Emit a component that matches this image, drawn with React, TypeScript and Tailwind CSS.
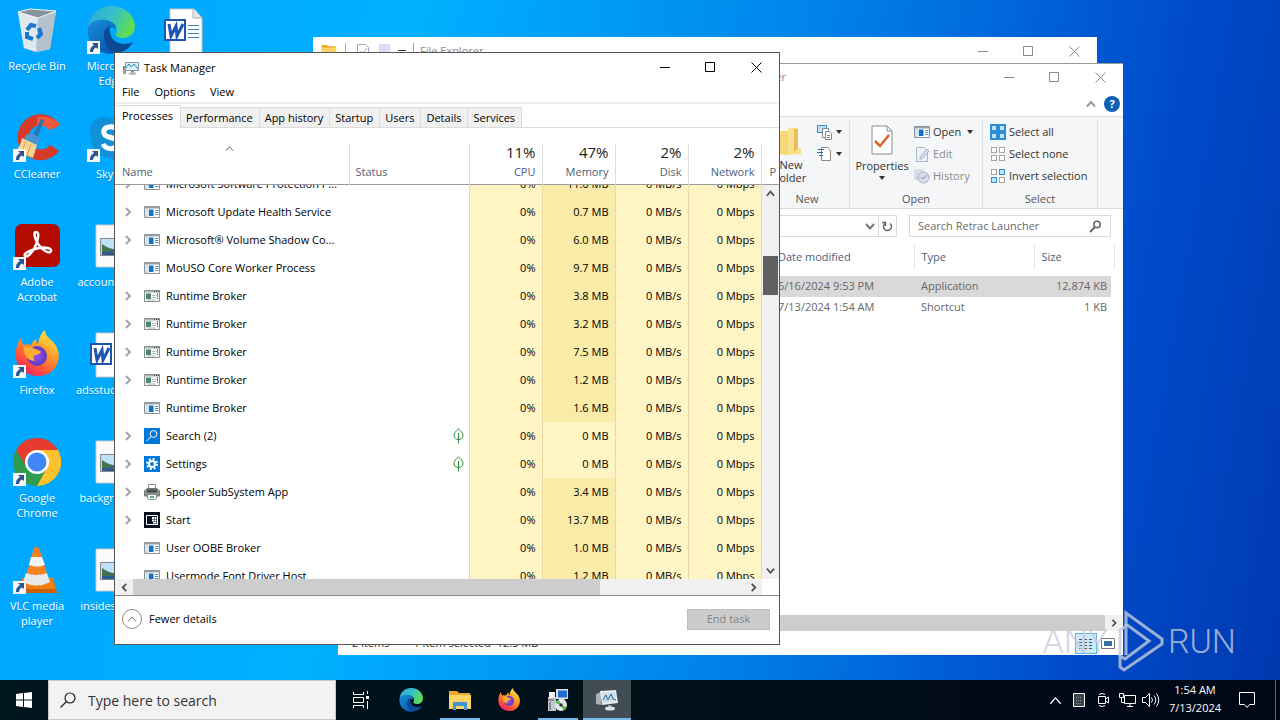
import { useState, type ReactNode } from 'react';

type IconKind = 'app' | 'broker' | 'search' | 'settings' | 'printer' | 'start';

interface ProcessRow {
  name: string;
  icon: IconKind;
  memory: string;
  expandable?: boolean;
  suspended?: boolean;
}

const processes: ProcessRow[] = [
  { name: 'Microsoft Software Protection P...', icon: 'app', memory: '11.6 MB', expandable: true },
  { name: 'Microsoft Update Health Service', icon: 'app', memory: '0.7 MB', expandable: true },
  { name: 'Microsoft® Volume Shadow Co...', icon: 'app', memory: '6.0 MB', expandable: true },
  { name: 'MoUSO Core Worker Process', icon: 'app', memory: '9.7 MB' },
  { name: 'Runtime Broker', icon: 'broker', memory: '3.8 MB', expandable: true },
  { name: 'Runtime Broker', icon: 'broker', memory: '3.2 MB', expandable: true },
  { name: 'Runtime Broker', icon: 'broker', memory: '7.5 MB', expandable: true },
  { name: 'Runtime Broker', icon: 'broker', memory: '1.2 MB', expandable: true },
  { name: 'Runtime Broker', icon: 'app', memory: '1.6 MB' },
  { name: 'Search (2)', icon: 'search', memory: '0 MB', expandable: true, suspended: true },
  { name: 'Settings', icon: 'settings', memory: '0 MB', expandable: true, suspended: true },
  { name: 'Spooler SubSystem App', icon: 'printer', memory: '3.4 MB', expandable: true },
  { name: 'Start', icon: 'start', memory: '13.7 MB', expandable: true },
  { name: 'User OOBE Broker', icon: 'app', memory: '1.0 MB' },
  { name: 'Usermode Font Driver Host', icon: 'app', memory: '1.2 MB' },
];

const usage = [
  { label: 'CPU', total: '11%' },
  { label: 'Memory', total: '47%' },
  { label: 'Disk', total: '2%' },
  { label: 'Network', total: '2%' },
];

const tabs = ['Processes', 'Performance', 'App history', 'Startup', 'Users', 'Details', 'Services'];

function Chevron({ dir, size = 10, width = 2 }: { dir: 'up' | 'down' | 'left' | 'right'; size?: number; width?: number }) {
  const d = {
    up: 'M1 7.5 5 3l4 4.5',
    down: 'M1 3l4 4.5L9 3',
    left: 'M7 1 3 5l4 4',
    right: 'M3 1l4 4-4 4',
  }[dir];
  return (
    <svg width={size} height={size} viewBox="0 0 10 10" fill="none" stroke="currentColor" strokeWidth={width}>
      <path d={d} />
    </svg>
  );
}

function ProcessIcon({ kind }: { kind: IconKind }) {
  if (kind === 'search') {
    return (
      <svg width="16" height="16" viewBox="0 0 16 16" fill="none">
        <path fill="#0078d7" d="M0 0h16v16H0z" />
        <circle cx="9.5" cy="6" r="3.4" stroke="#fff" />
        <path d="M7 8.5 2.8 13" stroke="#fff" />
      </svg>
    );
  }
  if (kind === 'settings') {
    return (
      <svg width="16" height="16" viewBox="0 0 16 16" fill="none">
        <path fill="#0078d7" d="M0 0h16v16H0z" />
        <circle cx="8" cy="8" r="3" stroke="#fff" strokeWidth="2.2" />
        <circle cx="8" cy="8" r="5" stroke="#fff" strokeWidth="2" strokeDasharray="2 1.93" />
      </svg>
    );
  }
  if (kind === 'printer') {
    return (
      <svg width="16" height="16" viewBox="0 0 16 16" fill="none">
        <path d="M4.5.5h7v5h-7z" fill="#fff" stroke="#8b8b8b" />
        <path d="M.5 7 3 4.5h10L15.5 7v5H.5z" fill="#8a8f93" stroke="#777" />
        <path d="M3 5.5h10v3H3z" fill="#4c4c4c" />
        <path d="M3.5 10.5h9v4l-2 1h-5l-2-1z" fill="#fff" stroke="#7c8f8c" />
        <path d="M6 12h4v2H6z" fill="#5ca89a" />
      </svg>
    );
  }
  if (kind === 'start') {
    return (
      <svg width="16" height="16" viewBox="0 0 16 16" fill="none">
        <path fill="#03101f" d="M0 0h16v16H0z" />
        <path d="M2.5 3.5h11v9h-11z" stroke="#fff" />
        <path d="M8 5h2v2H8zm2.5 0h2v2h-2zM8 7.5h2v2H8zm2.5 0h2v2h-2zM9 10h3.5v1.5H9z" fill="#fff" />
      </svg>
    );
  }
  if (kind === 'broker') {
    return (
      <svg width="16" height="16" viewBox="0 0 16 16" fill="none">
        <path d="M.5 2.5h15v11H.5z" fill="#f3f7f5" stroke="#87908f" />
        <path d="M1 3h14v1.5H1z" fill="#aeb8b6" />
        <path d="M10 3h1v1h-1zm2 0h1v1h-1zm2 0h1v1h-1z" fill="#444" />
        <path d="M2 5.5h5v5.5H2z" fill="#4c8573" />
        <path d="M8 7.5h4M8 9.5h4M3 12h8" stroke="#b5bfbc" />
        <path d="M13.5 5v4m0 1v1" stroke="#777" />
      </svg>
    );
  }
  return (
    <svg width="16" height="16" viewBox="0 0 16 16" fill="none">
      <path d="M.5 2.5h15v11H.5z" fill="#fff" stroke="#8b9298" />
      <path d="M1 3h14v1.5H1z" fill="#9aa2a8" />
      <path d="M1 5h4v8H1z" fill="#cfe6f7" />
      <path d="M5 5.5h4.5v6.5H5z" fill="#1673c4" />
      <path d="M11 6.5h3.5M11 8.5h3.5M11 10.5h3.5" stroke="#6593b8" />
    </svg>
  );
}

function TaskManagerIcon() {
  return (
    <svg width="16" height="16" viewBox="0 0 16 16" fill="none">
      <path d="M0 6h3v8H0z" fill="#9aa4a8" />
      <path d="M0 6h1v3H0z" fill="#2f9e4c" />
      <path d="M2.5 2.5h13v8h-13z" fill="#dff0fa" stroke="#8296a3" />
      <path d="m3 8 3-4 2 3 3-3 4 5" stroke="#2a8bb0" />
      <path d="M8 11h3v2H8z" fill="#8296a3" />
      <ellipse cx="9.5" cy="13.5" rx="4" ry="1.5" fill="#b4bec4" />
    </svg>
  );
}

function WindowControls({ light }: { light?: boolean }) {
  return (
    <div className={light ? 'flex self-stretch text-[#8a8a8a]' : 'flex self-stretch pb-px text-black'}>
      <button type="button" aria-label="Minimize" className="flex w-[46px] items-center justify-center">
        <svg width="11" height="11" stroke="currentColor"><path d="M0 5.5h10" /></svg>
      </button>
      <button type="button" aria-label="Maximize" className="flex w-[45px] items-center justify-center">
        <svg width="11" height="11" fill="none" stroke="currentColor"><path d="M.5.5h9v9h-9z" /></svg>
      </button>
      <button type="button" aria-label="Close" className="flex w-[46px] items-center justify-center">
        <svg width="11" height="11" stroke="currentColor"><path d="m.5.5 10 10m0-10-10 10" /></svg>
      </button>
    </div>
  );
}

// ---------- desktop icons ----------

function EdgeLogo({ size }: { size: number }) {
  return (
    <svg width={size} height={size} viewBox="0 0 48 48">
      <defs>
        <linearGradient id="edgeTop" x1="0" y1="0" x2="1" y2="0.4">
          <stop offset="0" stopColor="#2fa5dc" />
          <stop offset="0.55" stopColor="#35c1c9" />
          <stop offset="1" stopColor="#5fdc55" />
        </linearGradient>
        <linearGradient id="edgeLow" x1="0" y1="0" x2="0.6" y2="1">
          <stop offset="0" stopColor="#1a8fd8" />
          <stop offset="1" stopColor="#0a5ab4" />
        </linearGradient>
      </defs>
      <path fill="url(#edgeTop)" d="M1 21C3 8 12 0 24 0c14 0 24 10 24 20 0 8-6 12-12 12-5 0-8-2-7-4 3-5 0-12-8-13C12 14 3 17 1 21z" />
      <path fill="url(#edgeLow)" d="M1 21c3-6 11-9 18-7 7 1 10 6 10 9-5-3-11 0-12 7-1 8 6 14 13 17C13 51-1 38 1 21z" />
      <path fill="#0c4a94" d="M17 28c0-4 3-7 6-8-2 9 4 18 14 18 4 0 7-1 9-2-3 6-9 10-16 11-8-1-14-9-13-19z" />
    </svg>
  );
}

function FirefoxLogo({ size }: { size: number }) {
  return (
    <svg width={size} height={size} viewBox="0 0 48 48">
      <defs>
        <linearGradient id="ffBody" x1="0.8" y1="0" x2="0.2" y2="1">
          <stop offset="0" stopColor="#fff04f" />
          <stop offset="0.4" stopColor="#ff9a28" />
          <stop offset="0.75" stopColor="#ff4b3e" />
          <stop offset="1" stopColor="#e6197f" />
        </linearGradient>
        <radialGradient id="ffCore">
          <stop offset="0" stopColor="#9a4df5" />
          <stop offset="1" stopColor="#5a3bc4" />
        </radialGradient>
      </defs>
      <path fill="url(#ffBody)" d="M8 8c0 3 1 5 3 7 2-1 5-1 7 0 1-3 3-5 6-6-1 2-1 4 1 5 1-6 3-11 7-14 0 5 4 8 8 12 8 8 7 20 1 27C33 49 15 48 7 38 0 29 2 16 8 8z" />
      <circle cx="24" cy="26" r="10" fill="url(#ffCore)" />
      <path fill="#ffac2e" d="M11 17c5-1 8 0 11 2 3 1 6 2 6 3-1 3-6 2-7 4s0 4 1 5c-8 0-12-7-11-14z" />
    </svg>
  );
}

function RecycleBin() {
  return (
    <svg width="48" height="48" viewBox="0 0 48 48">
      <path d="m5 6 12-3 26 2-6 38-13 3-13-4z" fill="#c6d3dc" />
      <path d="m5 6 20 6-2 34-12-4z" fill="#dfe8ed" />
      <path d="m25 12 18-7-6 38-14 3z" fill="#b4c2cc" />
      <path d="m5 6 12-3 26 2-18 7z" fill="#84959e" stroke="#f2f6f8" />
      <path d="m14 24 4-5 5 1m3 2 2 6-4 4m-4 1-6-2 0-5" fill="none" stroke="#1678cf" strokeWidth="4" />
    </svg>
  );
}

function CCleaner() {
  return (
    <svg width="48" height="48" viewBox="0 0 48 48">
      <path d="M47 11A23 23 0 1 0 46 37l-9-6a12 12 0 1 1 0-15z" fill="#d63a28" />
      <path d="M47 11A23 23 0 0 0 24 3v9q8-2 13 4z" fill="#ef5a3c" />
      <path d="m28 5 3 1-7 19-5-2z" fill="#2c74b5" />
      <path d="M13 21q8-4 14 4l-3 6-13-6z" fill="#4596d1" />
      <path d="m9 24 15 7-4 13-18-7q5-3 7-13z" fill="#f7d493" />
      <path d="m13 27-5 12m10-9-4 12" stroke="#d89f55" />
    </svg>
  );
}

function Skype() {
  return (
    <svg width="48" height="48" viewBox="0 0 48 48">
      <circle cx="17" cy="17" r="14" fill="#0a91dd" />
      <circle cx="31" cy="31" r="15" fill="#0b7ed1" />
      <circle cx="24" cy="24" r="20" fill="#1290d8" />
      <path d="M31 17q-3-5-9-4c-7 1-7 8 0 10s9 3 8 8c-2 5-11 5-14-1" fill="none" stroke="#fff" strokeWidth="5" />
    </svg>
  );
}

function Acrobat() {
  return (
    <svg width="48" height="48" viewBox="0 0 48 48">
      <rect x="2" y="2" width="45" height="43" rx="7" fill="#b30b00" />
      <path d="M23 10c4 0 2 8-1 15-3 6-8 11-10 9-2-3 6-6 14-8 6-1 13 0 12 3-1 4-9-1-13-7-3-5-5-12-2-12z" fill="none" stroke="#fff" strokeWidth="2.5" />
    </svg>
  );
}

function Chrome() {
  return (
    <svg width="48" height="48" viewBox="0 0 48 48">
      <circle cx="24" cy="24" r="24" fill="#2e9b4f" />
      <path d="M3.2 12A24 24 0 0 1 44.800 12L24 13 13 28z" fill="#e63b2e" />
      <path d="M45 12A24 24 0 0 1 24 48l10-18-10-18z" fill="#fdc22d" />
      <circle cx="24" cy="24" r="12" fill="#fff" />
      <circle cx="24" cy="24" r="9.5" fill="#4086f4" />
    </svg>
  );
}

function Vlc() {
  return (
    <svg width="48" height="48" viewBox="0 0 48 48">
      <path d="M9 32h31l4 15H3z" fill="#f07f13" />
      <path d="M4 43h39l1 4H3z" fill="#c95f08" />
      <path d="M21 2q3-2 5 0l11 35q-13 8-26 0z" fill="#f58220" />
      <path d="m18 11 11 0 3 8q-8 3-16 0z" fill="#f5f5f5" />
      <path d="m13 27q10 4 21 0l3 9q-14 7-27 0z" fill="#e9e9e9" />
    </svg>
  );
}

function WordDoc() {
  return (
    <svg width="48" height="48" viewBox="0 0 48 48">
      <path d="M9 3h24l8 9v35H9z" fill="#fff" stroke="#c5c5c5" />
      <path d="M32 3v9h9" fill="#e6e6e6" stroke="#aaa" />
      <path d="M27 19.500h11M27 23.500h11M27 27.500h11M27 31.500h11" stroke="#3b7fca" />
      <path d="M4 14h20v20H4z" fill="#fff" stroke="#1e55b0" strokeWidth="2" />
      <path d="m8 18 2 12 5-10 1 10 6-12" fill="none" stroke="#1e55b0" strokeWidth="3" />
    </svg>
  );
}

function ImageDoc() {
  return (
    <svg width="48" height="48" viewBox="0 0 48 48">
      <path d="M9 3h34v42H9z" fill="#fafafa" stroke="#ccc" />
      <path d="M13.5 16.5h26v17h-26z" fill="#bfe0f7" stroke="#888" />
      <path d="M15 22q10 8 24 4v7H15z" fill="#3f7355" />
      <path d="M15 30h24v3H15z" fill="#2b5a91" />
    </svg>
  );
}

function ShortcutArrow() {
  return (
    <svg width="13" height="13" viewBox="0 0 13 13" className="absolute bottom-0 left-0">
      <path d="M0 0h13v13H0z" fill="#f7f7f7" />
      <path d="M5 2h6v6L9 6.500Q6 8 6 11H3Q2.500 6.500 7 4z" fill="#2c5490" />
    </svg>
  );
}

interface DesktopItem {
  label: string;
  icon: ReactNode;
  shortcut?: boolean;
}

const desktop: DesktopItem[][] = [
  [
    { label: 'Recycle Bin', icon: <RecycleBin /> },
    { label: 'CCleaner', icon: <CCleaner />, shortcut: true },
    { label: 'Adobe Acrobat', icon: <Acrobat />, shortcut: true },
    { label: 'Firefox', icon: <FirefoxLogo size={48} />, shortcut: true },
    { label: 'Google Chrome', icon: <Chrome />, shortcut: true },
    { label: 'VLC media player', icon: <Vlc />, shortcut: true },
  ],
  [
    { label: 'Microsoft Edge', icon: <EdgeLogo size={48} />, shortcut: true },
    { label: 'Skype', icon: <Skype />, shortcut: true },
    { label: 'accountnor...', icon: <ImageDoc /> },
    { label: 'adsstudent.rtf', icon: <WordDoc /> },
    { label: 'backgroun...', icon: <ImageDoc /> },
    { label: 'insidesout...', icon: <ImageDoc /> },
  ],
  [{ label: '', icon: <WordDoc /> }],
];

function DesktopIcons() {
  return (
    <div className="flex">
      {desktop.map((column, i) => (
        <div key={i} className="flex w-[74px] flex-col">
          {column.map((item, j) => (
            <div key={j} className="flex h-[108px] flex-col items-center gap-1 pt-[6px] text-center text-[11px] leading-[15px] text-white text-shadow-xs">
              <div className="relative">
                {item.icon}
                {item.shortcut && <ShortcutArrow />}
              </div>
              <span className="w-[70px]">{item.label}</span>
            </div>
          ))}
        </div>
      ))}
    </div>
  );
}

// ---------- explorer windows ----------

function FolderIcon({ size }: { size: number }) {
  return (
    <svg width={size} height={size} viewBox="0 0 24 24">
      <path d="M1 3h8l2 2h11v16H1z" fill="#e8ac26" />
      <path d="M1 7h22v14H1z" fill="#fdd566" />
      <path d="M5 14h14v8h-3v-4H8v4H5z" fill="#3f94d3" />
    </svg>
  );
}

function BackExplorer() {
  return (
    <section aria-label="File Explorer" className="absolute top-[37px] left-[313px] h-[580px] w-[784px] bg-white text-[11px] text-[#8a8a8a]">
      <header className="flex h-7 items-center pl-2">
        <FolderIcon size={16} />
        <span className="ml-2 h-4 w-px bg-[#aaa]" />
        <svg width="14" height="16" className="ml-[10px]" fill="none" stroke="#9aa8bd"><path d="M1.500 1.500h8l3 3v10h-11z" /><path d="m4 8 2 3 5-6" /></svg>
        <svg width="14" height="16" className="ml-2"><path d="M1 1h11v14H1z" fill="#dcdcf3" /></svg>
        <svg width="9" height="8" className="ml-[6px]" stroke="#333"><path d="M0 3.500h8" /></svg>
        <span className="mx-[6px] h-4 w-px bg-[#aaa]" />
        <span className="flex-1">File Explorer</span>
        <WindowControls light />
      </header>
    </section>
  );
}

function RibbonGroup({ label, width, children }: { label: string; width: string; children: ReactNode }) {
  return (
    <div className={`${width} mt-1 flex flex-col border-r border-[#e0e1e2]`}>
      <div className="flex flex-1">{children}</div>
      <span className="pb-px text-center leading-4 text-[#555]">{label}</span>
    </div>
  );
}

function RibbonButton({ icon, label, disabled, menu }: { icon: ReactNode; label: string; disabled?: boolean; menu?: boolean }) {
  return (
    <button type="button" disabled={disabled} className="flex h-[22px] items-center gap-[3px] whitespace-nowrap disabled:text-[#8a8a8a]">
      {icon}
      <span>{label}</span>
      {menu && <Caret />}
    </button>
  );
}

function Caret() {
  return <svg width="6" height="4" className="ml-[3px]" fill="#333"><path d="M0 0h6L3 4z" /></svg>;
}

function SelectIcon({ mode }: { mode: 'all' | 'none' | 'invert' }) {
  const on = { fill: '#bfe3fb', stroke: '#2f8fd6' };
  const off = { fill: '#fff', stroke: '#a6a6a6' };
  const a = mode === 'all' ? on : off;
  const b = mode === 'none' ? off : on;
  return (
    <svg width="16" height="16" viewBox="0 0 16 16">
      <rect x="1.500" y="1.500" width="5" height="5" {...a} />
      <rect x="9.500" y="1.500" width="5" height="5" {...b} />
      <rect x="1.500" y="9.500" width="5" height="5" {...b} />
      <rect x="9.500" y="9.500" width="5" height="5" {...a} />
      {mode === 'all' && <path d="M1 1h14v14H1zM8 1v14M1 8h14" fill="none" stroke="#2f8fd6" strokeWidth="2" />}
    </svg>
  );
}

function Ribbon() {
  return (
    <div className="flex h-[93px] justify-end border-y border-[#dadbdc] bg-[#f5f6f7] text-[11px] text-[#333]">
      <RibbonGroup label="New" width="w-[85px]">
        <button type="button" className="flex w-[52px] flex-col items-center pt-[5px] leading-[13px]">
          <svg width="24" height="32" viewBox="0 0 24 32">
            <path d="M1 5h8v24l-8-1z" fill="#f8d775" />
            <path d="M9 2h10v20h3v6l-13 1z" fill="#fbe08e" />
            <path d="m15 3 4 0v19l-4 5z" fill="#e9be55" />
          </svg>
          <span>New folder</span>
        </button>
        <div className="flex flex-col">
          <button type="button" aria-label="New item" className="flex h-[22px] items-center">
            <svg width="16" height="16" fill="#fff" stroke="#8a8a8a">
              <path d="M.5 1.500h9v7h-9z" fill="#bfe3fb" stroke="#2f8fd6" /><path d="M5.500 4.500h6v9h-6z" /><path d="M8.500 7.500h4l2 2v6h-6zM10 11.500h3M10 13.500h3" />
            </svg>
            <Caret />
          </button>
          <button type="button" aria-label="Easy access" className="flex h-[22px] items-center">
            <svg width="16" height="16" fill="#fff" stroke="#8a8a8a">
              <path d="M4.500 1.500h6l3 3v10h-9z" /><path d="M1 3.500h6M0 6.500h6M2 9.500h4" stroke="#2676b8" />
            </svg>
            <Caret />
          </button>
        </div>
      </RibbonGroup>
      <RibbonGroup label="Open" width="w-[133px]">
        <button type="button" className="flex w-16 flex-col items-center pt-1 leading-[14px]">
          <svg width="22" height="30" viewBox="0 0 22 30" fill="none">
            <path d="M1 1h15l5 5v23H1z" fill="#fff" stroke="#8a8a8a" />
            <path d="M16 1v5h5" stroke="#8a8a8a" />
            <path d="m4 16 5 5 9-11" stroke="#dd6428" strokeWidth="2.500" />
          </svg>
          <span className="pt-1">Properties</span>
          <svg width="6" height="4" className="mt-[3px]" fill="#333"><path d="M0 0h6L3 4z" /></svg>
        </button>
        <div className="flex flex-col">
          <RibbonButton icon={<ProcessIcon kind="app" />} label="Open" menu />
          <RibbonButton
            disabled
            label="Edit"
            icon={<svg width="16" height="16" fill="#eef2f8" stroke="#a9b7c9"><path d="M2.500 1.500h8l3 3v11h-11z" /><path d="m6 11 7-8 2 2-7 8H6z" fill="#d2dfee" /></svg>}
          />
          <RibbonButton
            disabled
            label="History"
            icon={<svg width="16" height="16" fill="#d7dde8" stroke="#a6b0c0"><path d="M.5 1.500h9v10h-9z" stroke="#d7dde8" /><circle cx="9.500" cy="9.500" r="5.500" /><path d="m7 9 2 2 4-4" fill="none" stroke="#8290a5" /></svg>}
          />
        </div>
      </RibbonGroup>
      <RibbonGroup label="Select" width="w-[115px]">
        <div className="flex flex-col pl-[7px]">
          <RibbonButton icon={<SelectIcon mode="all" />} label="Select all" />
          <RibbonButton icon={<SelectIcon mode="none" />} label="Select none" />
          <RibbonButton icon={<SelectIcon mode="invert" />} label="Invert selection" />
        </div>
      </RibbonGroup>
      <div className="w-[25px]" />
    </div>
  );
}

function FrontExplorer() {
  return (
    <section aria-label="Retrac Launcher" className="absolute top-[63px] left-[338px] flex h-[592px] w-[785px] flex-col border-t border-[#9a9a9a] bg-white text-[11px] text-[#666]">
      <header className="flex h-[26px] items-center">
        <span className="w-[448px] text-right text-[#8a8a8a]">Retrac Launcher</span>
        <span className="flex-1" />
        <WindowControls light />
      </header>
      <div className="flex h-[26px] items-center justify-end gap-2 pt-[2px] pr-[3px] text-[#999]">
        <button type="button" aria-label="Collapse ribbon"><Chevron dir="up" /></button>
        <button type="button" aria-label="Help" className="flex size-4 items-center justify-center rounded-full bg-[#0c62b8] font-bold text-white">?</button>
      </div>
      <Ribbon />
      <div className="flex gap-3 px-3 pt-[6px] text-[#767676]">
        <div className="flex h-[22px] flex-1 items-center justify-end border border-[#d9d9d9]">
          <button type="button" aria-label="Previous locations" className="px-[3px]"><Chevron dir="down" /></button>
          <button type="button" aria-label="Refresh" className="flex h-full w-[18px] items-center justify-center border-l border-[#d9d9d9]">
            <svg width="11" height="11" viewBox="0 0 11 11" fill="none" stroke="#666" strokeWidth="1.500"><path d="M8 2.500A4 4 0 1 1 3 2.500M3.500 5V1.500H0" /></svg>
          </button>
        </div>
        <div className="flex h-[22px] w-[202px] items-center border border-[#d9d9d9] px-2">
          <input type="search" aria-label="Search Retrac Launcher" placeholder="Search Retrac Launcher" className="min-w-0 flex-1 outline-none placeholder:text-[#6a6a6a]" />
          <svg width="13" height="13" viewBox="0 0 13 13" fill="none" stroke="#666" strokeWidth="1.500"><circle cx="8" cy="4.500" r="3.200" /><path d="M6 7 1 12" strokeWidth="2" /></svg>
        </div>
      </div>
      <table className="mt-2 w-full table-fixed">
        <colgroup>
          <col />
          <col className="w-[143px]" />
          <col className="w-[120px]" />
          <col className="w-[77px]" />
          <col className="w-[3px]" />
          <col className="w-[9px]" />
        </colgroup>
        <thead>
          <tr className="h-6 text-left text-[#4c607a]">
            <th className="pl-3 font-normal">Name</th>
            <th className="border-r border-[#e5e5e5] pl-[7px] font-normal">Date modified</th>
            <th className="border-r border-[#e5e5e5] pl-[7px] font-normal">Type</th>
            <th colSpan={2} className="border-r border-[#e5e5e5] pl-[7px] font-normal">Size</th>
            <th />
          </tr>
        </thead>
        <tbody>
          <tr className="h-[7px]" />
          <tr className="h-[21px]">
            <td className="bg-[#d9d9d9] pl-3">Retrac Launcher</td>
            <td className="bg-[#d9d9d9] pl-[7px]">6/16/2024 9:53 PM</td>
            <td className="bg-[#d9d9d9] pl-[7px]">Application</td>
            <td className="bg-[#d9d9d9] pr-1 text-right whitespace-nowrap">12,874 KB</td>
            <td colSpan={2} />
          </tr>
          <tr className="h-[21px]">
            <td className="pl-3">Retrac Launcher</td>
            <td className="pl-[7px]">7/13/2024 1:54 AM</td>
            <td className="pl-[7px]">Shortcut</td>
            <td className="pr-1 text-right">1 KB</td>
            <td colSpan={2} />
          </tr>
        </tbody>
      </table>
      <div className="mt-auto flex h-4 bg-[#f0f0f0]">
        <div className="flex-1 bg-[#cdcdcd]" />
        <button type="button" aria-label="Scroll right" className="flex w-[18px] items-center justify-center text-[#444]"><Chevron dir="right" size={8} /></button>
      </div>
      <footer className="flex h-6 items-center gap-6 pr-1 pl-[14px] text-[#333]">
        <span>2 items</span>
        <span className="flex-1">1 item selected&nbsp; 12.3 MB</span>
        <span className="flex">
          <button type="button" aria-label="Details view" className="flex h-[21px] w-[22px] items-center justify-center border border-[#5fb6d8] bg-[#cbe8f6]">
            <svg width="14" height="11" stroke="#555"><path d="M0 1.500h3m2 0h3m2 0h3M0 4.500h3m2 0h3m2 0h3M0 7.500h3m2 0h3m2 0h3M0 10.500h3m2 0h3m2 0h3" /></svg>
          </button>
          <button type="button" aria-label="Large icons" className="flex h-[21px] w-[22px] items-center justify-center">
            <svg width="14" height="11"><path d="M.5.500h13v10H.5z" fill="#fff" stroke="#777" /><path d="M3 3h8v5H3z" fill="#3a6ea5" /></svg>
          </button>
        </span>
      </footer>
    </section>
  );
}

// ---------- task manager ----------

function ProcessColumns() {
  return (
    <colgroup>
      <col className="w-[234px]" />
      <col className="w-[120px]" />
      <col className="w-[73px]" />
      <col className="w-[73px]" />
      <col className="w-[73px]" />
      <col className="w-[73px]" />
      <col />
    </colgroup>
  );
}

function ProcessTable() {
  const heat = 'border-r border-[#ecd9a0] bg-[#fff4c4] pr-[6px] text-right';
  return (
    <>
      <table className="mt-4 w-full table-fixed border-b border-[#9a9a9a]">
        <ProcessColumns />
        <thead>
          <tr className="h-10 text-[#4c607a]">
            <th scope="col" className="border-r border-[#ddd] pl-[7px] text-left font-normal">
              <div className="flex h-4 justify-center pr-3 text-[#555]"><Chevron dir="up" size={9} width={1} /></div>
              <div className="leading-6">Name</div>
            </th>
            <th scope="col" className="border-r border-[#ddd] pl-[6px] text-left align-bottom leading-6 font-normal">Status</th>
            {usage.map((u) => (
              <th key={u.label} scope="col" className="border-r border-[#ddd] pr-[6px] text-right font-normal">
                <div className="text-[15px] leading-4 text-[#222]">{u.total}</div>
                <div className="leading-6">{u.label}</div>
              </th>
            ))}
            <th scope="col" className="overflow-hidden pl-2 text-left align-bottom leading-6 font-normal">P</th>
          </tr>
        </thead>
      </table>
      <div className="flex min-h-0 flex-1">
        <div className="min-w-0 flex-1 overflow-hidden">
          <table className="-mt-[15px] w-full table-fixed text-black">
            <ProcessColumns />
            <tbody>
              {processes.map((p, i) => (
                <tr key={i} className="h-7">
                  <td className="pl-[7px]">
                    <div className="flex items-center whitespace-nowrap">
                      <span className="mr-[10px] flex w-3 justify-center text-[#a3a3a3]">
                        {p.expandable && (
                          <button type="button" aria-label={`Expand ${p.name}`}><Chevron dir="right" /></button>
                        )}
                      </span>
                      <ProcessIcon kind={p.icon} />
                      <span className="ml-[6px]">{p.name}</span>
                    </div>
                  </td>
                  <td className="border-r border-[#ecd9a0] pr-[5px]">
                    {p.suspended && (
                      <svg width="11" height="16" viewBox="0 0 11 16" className="ml-auto" fill="none" stroke="#2e8b3a">
                        <path d="M5.500 1C3 3 1 5 1 7.500S3 11.500 5.500 11.500 10 10 10 7.500 8 3 5.500 1zM5.500 5v10.500" />
                      </svg>
                    )}
                  </td>
                  <td className={heat}>0%</td>
                  <td className={p.memory === '0 MB' ? heat : 'border-r border-[#ecd9a0] bg-[#f9eca8] pr-[6px] text-right'}>{p.memory}</td>
                  <td className={heat}>0 MB/s</td>
                  <td className={heat}>0 Mbps</td>
                </tr>
              ))}
            </tbody>
          </table>
        </div>
        <div className="flex w-[17px] flex-col bg-[#f0f0f0] text-[#505050]">
          <button type="button" aria-label="Scroll up" className="flex h-[17px] items-center justify-center"><Chevron dir="up" size={9} /></button>
          <div className="mx-px mt-[54px] h-[39px] bg-[#606060]" />
          <button type="button" aria-label="Scroll down" className="mt-auto flex h-[17px] items-center justify-center"><Chevron dir="down" size={9} /></button>
        </div>
      </div>
      <div className="flex h-[17px] border-b border-[#8a8a8a] pr-[17px] text-[#505050]">
        <button type="button" aria-label="Scroll left" className="flex w-[18px] items-center justify-center bg-[#f0f0f0]"><Chevron dir="left" size={9} /></button>
        <div className="w-[467px] bg-[#cdcdcd]" />
        <button type="button" aria-label="Scroll right" className="flex flex-1 items-center justify-end bg-[#f0f0f0] pr-1"><Chevron dir="right" size={9} /></button>
      </div>
    </>
  );
}

function TaskManager() {
  const [active, setActive] = useState('Processes');
  return (
    <section aria-label="Task Manager" className="absolute top-[52px] left-[114px] flex h-[593px] w-[666px] flex-col border border-[#555] bg-white text-[11px] text-black">
      <header className="flex h-[30px] items-center pl-2">
        <TaskManagerIcon />
        <span className="ml-[5px] flex-1">Task Manager</span>
        <WindowControls />
      </header>
      <nav className="flex h-[21px] items-center gap-[15px] border-b-2 border-[#f0f0f0] pl-[7px]">
        <button type="button">File</button>
        <button type="button">Options</button>
        <button type="button">View</button>
      </nav>
      <div role="tablist" className="flex h-6 items-end border-b border-[#dcdcdc]">
        {tabs.map((t) => (
          <button
            key={t}
            type="button"
            role="tab"
            aria-selected={t === active}
            onClick={() => setActive(t)}
            className={
              t === active
                ? '-mb-px h-[23px] border-t border-r border-[#dcdcdc] bg-white px-[7px] pb-[2px]'
                : 'h-5 border-t border-r border-[#dcdcdc] bg-[#f0f0f0] pt-px pr-[6px] pl-[5px]'
            }
          >
            {t}
          </button>
        ))}
      </div>
      <ProcessTable />
      <footer className="flex h-12 items-center justify-between pr-[9px] pb-[2px] pl-[7px]">
        <button type="button" className="flex items-center gap-[7px]">
          <span className="flex size-5 items-center justify-center rounded-full border border-[#8a8a8a] text-[#777]"><Chevron dir="up" width={1} /></span>
          Fewer details
        </button>
        <button type="button" disabled className="h-[21px] w-[83px] border border-[#bfbfbf] bg-[#cccccc] text-[#838383]">End task</button>
      </footer>
    </section>
  );
}

function Watermark() {
  return (
    <div className="pointer-events-none absolute right-[44px] bottom-2 flex items-center gap-1 font-[Roboto] text-[34px] leading-[60px] font-light text-[#c3cbdb]/80">
      <span>ANY</span>
      <svg width="52" height="62" viewBox="0 0 52 62" fill="none" stroke="currentColor" strokeWidth="3">
        <path d="m14 3 36 26v5L12 60l-4-3V46l5 3 24-18-23-17z" />
        <path d="M14 14v31M8 46V20l6-4" />
      </svg>
      <span>RUN</span>
    </div>
  );
}

// ---------- taskbar ----------

function TaskButton({ label, state, children }: { label: string; state?: 'open' | 'active'; children: ReactNode }) {
  return (
    <button
      type="button"
      aria-label={label}
      className={
        state === 'active'
          ? 'flex w-12 items-center justify-center border-b-2 border-[#76b9ed] bg-[#414c54] pt-[2px]'
          : 'flex w-12 flex-col items-center justify-center'
      }
    >
      {state === 'open' ? (
        <>
          <span className="flex flex-1 items-center pt-[2px]">{children}</span>
          <span className="h-[2px] w-10 bg-[#76b9ed]" />
        </>
      ) : (
        children
      )}
    </button>
  );
}

function Taskbar() {
  return (
    <footer className="flex h-10 bg-linear-to-r from-[#00161f] via-[#001019] to-[#000716] text-white">
      <button type="button" aria-label="Start" className="flex w-12 items-center justify-center">
        <svg width="16" height="16" viewBox="0 0 16 16" fill="#fff"><path d="m0 2 7-1v6.500H0zm8-1 8-1v7.500H8zM0 8.500h7V15l-7-1zm8 0h8V16l-8-1z" /></svg>
      </button>
      <div className="flex w-72 items-center gap-3 border border-[#c8c8c8] bg-[#f2f2f2] pl-[11px] text-[#333]">
        <svg width="16" height="16" viewBox="0 0 16 16" fill="none" stroke="#222" strokeWidth="1.200"><circle cx="10" cy="6" r="5" /><path d="m6.500 9.500-6 6" /></svg>
        <input type="search" aria-label="Type here to search" placeholder="Type here to search" className="min-w-0 flex-1 text-[14px] outline-none placeholder:text-[#333]" />
      </div>
      <div className="flex gap-px pl-[2px]">
        <TaskButton label="Task View">
          <svg width="18" height="18" viewBox="0 0 18 18" fill="none" stroke="#fff"><path d="M.5 1v2.500h10V1M.5 6.500h10v5H.500zM.5 17v-2.500h10V17M14.500 0v3m0 7v8" /><path d="M13 5h3v3h-3z" fill="#fff" stroke="none" /></svg>
        </TaskButton>
        <TaskButton label="Microsoft Edge"><EdgeLogo size={24} /></TaskButton>
        <TaskButton label="File Explorer" state="open"><FolderIcon size={24} /></TaskButton>
        <TaskButton label="Firefox"><FirefoxLogo size={24} /></TaskButton>
        <TaskButton label="Installer" state="open">
          <svg width="24" height="24" viewBox="0 0 24 24">
            <path d="M10 1h12v10H10z" fill="#d9dfe4" />
            <path d="M12 2.500h9v7h-9z" fill="#1f6bd6" />
            <path d="M13 11h6v2h-6z" fill="#aab3ba" />
            <path d="M2 9h8v14H2z" fill="#c2c8cc" />
            <path d="M3 4h6v6H3z" fill="#f0f2f3" />
            <path d="M2 12h6M4 14v8" stroke="#555" />
            <circle cx="15" cy="17" r="6" fill="#e4e9ea" />
            <path d="M15 17 9.500 15a6 6 0 0 1 3-3.500zM15 17l5.500 2a6 6 0 0 1-3 3.500z" fill="#58b94d" />
            <circle cx="15" cy="17" r="1.800" fill="#333" />
          </svg>
        </TaskButton>
        <TaskButton label="Task Manager" state="active">
          <svg width="24" height="24" viewBox="0 0 24 24" fill="none">
            <path d="m1 6 5-2v13l-5-1z" fill="#aab1b6" />
            <path d="m5 3 16-1 2 13-16 2z" fill="#e9edf0" />
            <path d="m7 5 13-1 1 9-13 2z" fill="#c9dcea" />
            <path d="m8 12 3-5 2 5 3-6 2 5 3 1" stroke="#2f6ea3" />
            <path d="m13 17 3 0 1 2h-4z" fill="#9aa2a8" />
            <ellipse cx="15" cy="20.500" rx="5" ry="2" fill="#dfe3e6" />
          </svg>
        </TaskButton>
      </div>
      <div className="ml-auto flex items-center">
        <div className="flex items-center">
          <button type="button" aria-label="Show hidden icons" className="flex w-6 justify-center"><Chevron dir="up" size={13} width={1} /></button>
          <span className="flex w-6 justify-center">
            <svg width="12" height="14"><path d="M.5.500h11v13H.5z" fill="#39434a" stroke="#fff" /><path d="M3 4.500h6M3 7.500h6M3 10.500h6" stroke="#8a949b" strokeDasharray="1 1" /></svg>
          </span>
          <span className="flex w-6 justify-center">
            <svg width="14" height="16" fill="none" stroke="#fff"><path d="M2.500 4.500h7v7h-7zM9.500 7l3-2v6l-3-2M3 2.500q3-2 6 0M3 13.500q3 2 6 0" /></svg>
          </span>
          <span className="flex w-6 justify-center">
            <svg width="17" height="16" fill="none" stroke="#fff"><path d="M5.500 3.500h11v8h-11zM8 14.500h6M11 11.500v3M.5 1.500h4v4h-4zM2.500 5.500v5h3" /></svg>
          </span>
          <span className="flex w-6 justify-center">
            <svg width="18" height="16" fill="none" stroke="#fff"><path d="M.5 5.500h3l4-4v13l-4-4h-3zM9.500 5.500q2 2.500 0 5M12 3.500q3.500 4.500 0 9M14.500 1.500q4.500 6.500 0 13" /></svg>
          </span>
        </div>
        <div className="w-16 pb-[2px] text-center text-[11px] leading-[18px]">
          <div>1:54 AM</div>
          <div>7/13/2024</div>
        </div>
        <button type="button" aria-label="Notifications" className="flex w-10 justify-center">
          <svg width="16" height="17" fill="none" stroke="#fff"><path d="M.5.500h15v12h-5l-2.500 3-2.500-3h-5z" /></svg>
        </button>
        <span className="ml-2 h-10 w-[5px] border-l border-[#5a6670]" />
      </div>
    </footer>
  );
}

export default function App() {
  return (
    <div className="flex h-screen flex-col overflow-hidden font-['Open_Sans',sans-serif]">
      <main className="relative min-h-0 flex-1 bg-linear-[100deg,#00a6ff_0%,#00b0ff_30%,#0084ea_58%,#004bcb_85%,#0039b0_100%]">
        <DesktopIcons />
        <BackExplorer />
        <FrontExplorer />
        <TaskManager />
        <Watermark />
      </main>
      <Taskbar />
    </div>
  );
}
